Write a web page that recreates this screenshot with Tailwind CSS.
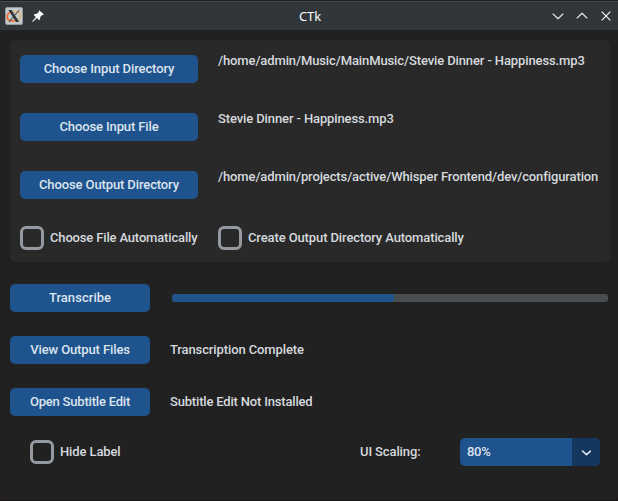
<!DOCTYPE html>
<html lang="en">
<head>
<meta charset="utf-8">
<title>CTk</title>
<script src="https://cdn.jsdelivr.net/npm/@tailwindcss/browser@4"></script>
</head>
<body class="h-[501px] w-[618px] overflow-hidden bg-[#1b1718] font-['Roboto','Liberation_Sans',sans-serif] text-[13px] leading-4 font-medium tracking-[-0.115px] whitespace-nowrap text-[#d5d9de]">
<div class="flex h-[500px] w-[618px] flex-col rounded-b-[4px] bg-[#212121]">
  <header class="grid h-[30px] shrink-0 grid-cols-[1fr_auto_1fr] items-center border-t border-[#1c1f22] bg-[#31363b] shadow-[inset_0_1px_0_#454a4f]">
    <div class="flex items-center gap-[9px] pl-[5px]">
      <svg width="18" height="18" viewBox="0 0 18 18" fill="none">
        <rect x=".5" y=".5" width="17" height="17" rx="1.5" fill="#c3c8ca" stroke="#939a9e"/>
        <ellipse cx="9" cy="9.3" rx="6.8" ry="4.6" transform="rotate(-12 9 9.3)" stroke="#e9b36f" stroke-width="1.2"/>
        <path d="M5.5 5.2C2 7 1.1 10 3 12.2S8 14 10 13.6" stroke="#ef6635" stroke-width="1.5"/>
        <path d="M3.4 3h3.2l7.6 12H11z" fill="#30363a"/>
        <path d="M14.2 3 9.8 8.3M8 10.2 4 15" stroke="#30363a"/>
      </svg>
      <svg width="12" height="12" viewBox="0 0 12 12" fill="#fcfcfc">
        <path d="m7.3.2 4.4 4.1-.9.9-.7-.1L8.2 7l-.1 2.2-.9 1.1-2.2-2.2L.6 11.9l-.5-.5L3.8 7 1.7 4.9l1-1 2.1-.1 2.1-2L6.8 1z"/>
      </svg>
    </div>
    <h1 class="pt-px pl-[2px] font-['Noto_Sans',sans-serif] text-[13px] font-normal tracking-[-0.2px] text-[#fcfcfc]">CTk</h1>
    <div class="flex items-center justify-end gap-3 pr-[6px] pt-px">
      <svg width="12" height="12" viewBox="0 0 12 12" fill="none" stroke="#fcfcfc" stroke-width="1.1"><path d="m.7 3.7 5.3 5 5.3-5"/></svg>
      <svg width="12" height="12" viewBox="0 0 12 12" fill="none" stroke="#fcfcfc" stroke-width="1.1"><path d="m.7 8.3 5.3-5 5.3 5"/></svg>
      <svg width="12" height="12" viewBox="0 0 12 12" fill="none" stroke="#fcfcfc" stroke-width="1.1"><path d="m1.7 1.7 8.6 8.6m0-8.6-8.6 8.6"/></svg>
    </div>
  </header>

  <main class="pt-[10px] pl-[10px]">
    <section class="h-[222px] w-[600px] rounded-[5px] bg-[#292929] px-[10px] pt-[15px]">
      <div class="grid grid-cols-[178px_1fr] gap-x-5 gap-y-[30px]">
        <button class="h-7 rounded-[5px] bg-[#1f538d] text-[#dce4ee]">Choose Input Directory</button>
        <p class="-mt-[2px]">/home/admin/Music/MainMusic/Stevie Dinner - Happiness.mp3</p>
        <button class="h-7 rounded-[5px] bg-[#1f538d] text-[#dce4ee]">Choose Input File</button>
        <p class="-mt-[2px]">Stevie Dinner - Happiness.mp3</p>
        <button class="h-7 rounded-[5px] bg-[#1f538d] text-[#dce4ee]">Choose Output Directory</button>
        <p class="-mt-[2px]">/home/admin/projects/active/Whisper Frontend/dev/configuration</p>
      </div>
      <div class="mt-[27px] grid grid-cols-[178px_1fr] gap-x-5">
        <label class="flex items-center gap-[6px] tracking-[-0.16px]"><span class="size-6 shrink-0 rounded-[6px] border-[3px] border-[#949a9f]"></span>Choose File Automatically</label>
        <label class="flex items-center gap-[6px]"><span class="size-6 shrink-0 rounded-[6px] border-[3px] border-[#949a9f]"></span>Create Output Directory Automatically</label>
      </div>
    </section>

    <section class="mt-[22px] grid grid-cols-[140px_1fr] items-center gap-x-5 gap-y-6">
      <button class="h-7 rounded-[5px] bg-[#1f538d] tracking-[0.05px] text-[#dce4ee]">Transcribe</button>
      <div class="ml-[2px] h-2 w-[436px] overflow-hidden rounded-[3px] bg-[#4a4d50]"><div class="h-full w-[222px] rounded-[3px] bg-[#1f538d]"></div></div>
      <button class="h-7 rounded-[5px] bg-[#1f538d] text-[#dce4ee]">View Output Files</button>
      <p>Transcription Complete</p>
      <button class="h-7 rounded-[5px] bg-[#1f538d] tracking-[-0.2px] text-[#dce4ee]">Open Subtitle Edit</button>
      <p class="tracking-[-0.18px]">Subtitle Edit Not Installed</p>
    </section>

    <footer class="mt-[22px] flex items-center pl-5">
      <label class="flex w-[330px] items-center gap-[6px]"><span class="size-6 shrink-0 rounded-[6px] border-[3px] border-[#949a9f]"></span>Hide Label</label>
      <span class="w-[100px]">UI Scaling:</span>
      <div class="flex h-7 w-[140px] overflow-hidden rounded-[5px] bg-[#1f538d] text-[#dce4ee]">
        <span class="flex w-28 items-center pl-[7px] tracking-[-0.3px]">80%</span>
        <span class="flex w-7 items-center justify-center bg-[#14375e]">
          <svg class="mt-px" width="10" height="6" viewBox="0 0 10 6" fill="none" stroke="#dce4ee" stroke-width="1.6" stroke-linecap="round" stroke-linejoin="round"><path d="m1.5 1 4 3.6 4-3.6"/></svg>
        </span>
      </div>
    </footer>
  </main>
</div>
</body>
</html>
